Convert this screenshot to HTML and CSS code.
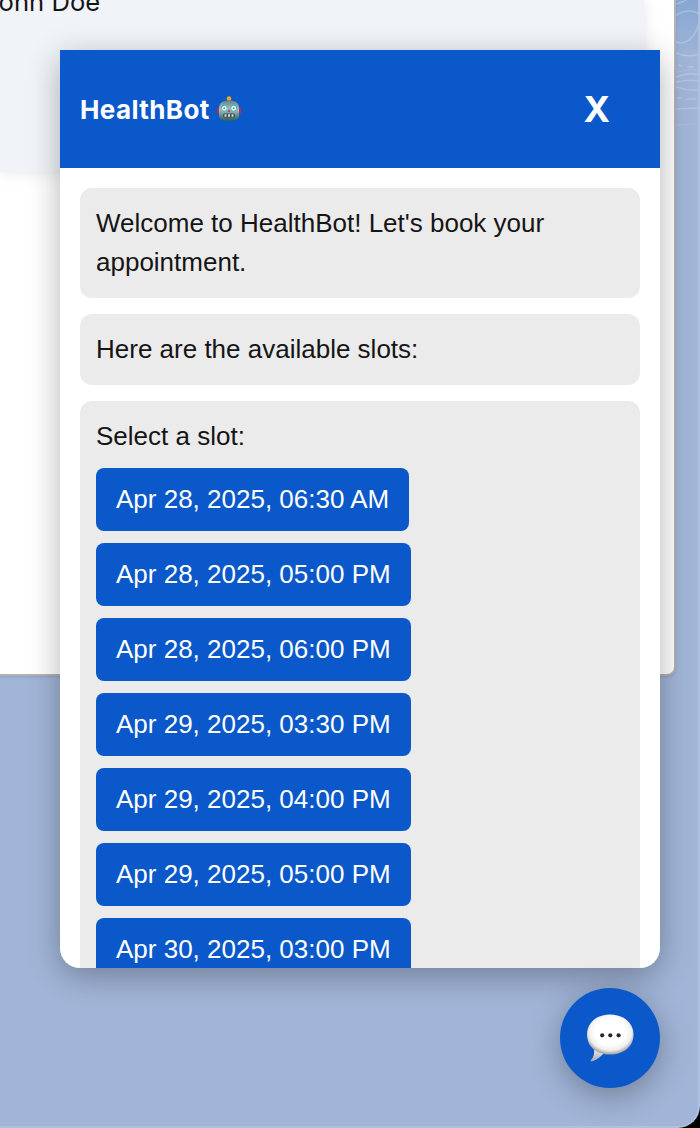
FILE: index.html
```html
<!DOCTYPE html>
<html lang="en">
<head>
<meta charset="utf-8">
<title>HealthBot</title>
<link rel="stylesheet" href="styles.css">
</head>
<body>
<div class="window">
  <svg class="pattern" width="24" height="140" viewBox="0 0 24 140" fill="none" stroke="#c6d4eb" stroke-opacity=".5" stroke-width="1.5">
    <path d="M0 4Q8 2 13-2M0 15Q12 8 22 13Q25 18 21 29Q15 43 3 43L0 42M0 53Q10 58 24 54M3 65L6 66M11 67L18 67M0 77Q12 72 24 75M0 82Q12 79 24 81M0 87Q12 91 24 90M1 98L6 98M11 99L20 99M0 109L24 108" />
    <path d="M0 72Q10 69 24 70M0 125L24 124" stroke-opacity=".2"/>
  </svg>
  <main class="page">
    <section class="profile"><p class="name">John Doe</p></section>
  </main>
</div>
<aside class="chat">
  <header class="chat-header">
    <h1 class="title">HealthBot
      <svg class="robot" width="26" height="26" viewBox="0 0 26 26">
        <defs><linearGradient id="metal" x2="0" y2="1"><stop offset="0" stop-color="#66817e"/><stop offset=".45" stop-color="#9cc5c5"/><stop offset="1" stop-color="#235e62"/></linearGradient></defs>
        <rect x="12" y="3" width="2" height="4" fill="#b84735"/>
        <circle cx="13" cy="2.6" r="2.3" fill="#efa72d"/>
        <rect x="1" y="11" width="4" height="7" rx="1.5" fill="#b92b49"/>
        <rect x="21" y="11" width="4" height="7" rx="1.5" fill="#b92b49"/>
        <path d="M7 5.5Q13 3 19 5.5Q23 7 23 12V20Q22 24 18 25H8Q4 24 3 20V12Q3 7 7 5.5Z" fill="url(#metal)"/>
        <g fill="#edffff" stroke="#4ba6bd" stroke-width="1"><circle cx="8.3" cy="12.2" r="3"/><circle cx="17.7" cy="12.2" r="3"/></g>
        <circle cx="8.3" cy="12.2" r="1" fill="#4596ae"/><circle cx="17.7" cy="12.2" r="1" fill="#4596ae"/>
        <path d="M13 13L11.5 16H14.5Z" fill="#c8433f"/>
        <rect x="7" y="17.5" width="12" height="4" rx="1.5" fill="#454b4c"/>
        <path d="M8.5 19.5H10.5M12 19.5H14M15.5 19.5H17.5" stroke="#d3d9d8" stroke-width="2.4"/>
      </svg>
    </h1>
    <button class="close">X</button>
  </header>
  <div class="messages">
    <div class="message">Welcome to HealthBot! Let's book your appointment.</div>
    <div class="message">Here are the available slots:</div>
    <div class="message">Select a slot:
      <div class="slots">
        <button class="slot">Apr 28, 2025, 06:30 AM</button>
        <button class="slot">Apr 28, 2025, 05:00 PM</button>
        <button class="slot">Apr 28, 2025, 06:00 PM</button>
        <button class="slot">Apr 29, 2025, 03:30 PM</button>
        <button class="slot">Apr 29, 2025, 04:00 PM</button>
        <button class="slot">Apr 29, 2025, 05:00 PM</button>
        <button class="slot">Apr 30, 2025, 03:00 PM</button>
      </div>
    </div>
  </div>
</aside>
<button class="launcher" aria-label="Open chat">
  <svg width="50" height="50" viewBox="0 0 50 50">
    <defs>
      <radialGradient id="bubble" cx=".5" cy=".43" r=".56"><stop offset=".6" stop-color="#fff"/><stop offset=".83" stop-color="#eee"/><stop offset="1" stop-color="#a5a5a5"/></radialGradient>
      <linearGradient id="tail" x2="0" y2="1"><stop offset="0" stop-color="#eee"/><stop offset="1" stop-color="#aaa"/></linearGradient>
    </defs>
    <path d="M9 36Q10 43 6 47Q4 49 8 48Q15 45 19 40Z" fill="url(#tail)"/>
    <path d="M25 1.5C38 1.5 48.5 9.5 48.5 21.5S39 41.5 25 41.5S2 33.5 2 21.5S12 1.5 25 1.5Z" fill="url(#bubble)"/>
    <g fill="#292929"><circle cx="17.2" cy="22.3" r="2.1"/><circle cx="25.3" cy="22.3" r="2.1"/><circle cx="33.6" cy="22.3" r="2.1"/></g>
  </svg>
</button>
</body>
</html>
```
FILE: styles.css
```css
* { box-sizing: border-box; }
body { margin: 0; height: 1128px; overflow: hidden; position: relative; background: #000; }
button { border: 0; margin: 0; color: #fff; background: #0a58ca; }
.window {
  position: relative; height: 1128px; overflow: hidden;
  background: linear-gradient(#86a6d2 0, #a1b5d8 60px);
  border-right: 2px solid #adc0df; border-bottom: 2px solid #adc0df;
  border-bottom-right-radius: 22px;
}
.pattern { position: absolute; left: 676px; top: 0; }
.page {
  width: 676px; height: 676px; background: #fff;
  border-right: 2px solid #b2b2b2; border-bottom: 2px solid #b2b2b2;
  border-bottom-right-radius: 9px; box-shadow: 0 1px 3px rgba(0,0,0,.12);
}
.profile { width: 644px; height: 172px; background: #f0f4f9; box-shadow: 0 0 16px rgba(0,0,0,.1); }
.name { margin: 0 0 0 -16px; font: 25.6px/39px Inter, sans-serif; color: #151515; transform: translateY(-18px); }
.chat {
  position: absolute; left: 60px; top: 50px; width: 600px; height: 918px;
  display: flex; flex-direction: column; overflow: hidden;
  background: #fff; border-radius: 0 0 20px 20px;
}
.chat, .launcher { box-shadow: 0 8px 32px rgba(0,0,0,.3); }
.chat-header {
  flex: none; height: 118px; padding: 0 50px 0 20px;
  display: flex; align-items: center; justify-content: space-between;
  background: #0a58ca; color: #fff;
}
.title { margin: 0; display: flex; align-items: center; gap: 6px; font: 700 26px/39px Inter, sans-serif; letter-spacing: .4px; }
.close { padding: 0; font: 700 36px/40px Inter, sans-serif; }
.messages {
  flex: 1; min-height: 0; overflow: hidden; padding: 20px;
  display: flex; flex-direction: column; gap: 16px;
  font: 26px/39px "Liberation Sans", Arial, sans-serif; color: #151515;
}
.message { flex: none; padding: 16px; background: #ebebeb; border-radius: 12px; }
.slots { margin-top: 12px; display: flex; flex-direction: column; align-items: flex-start; gap: 12px; }
.slot { height: 63px; padding: 0 20px; border-radius: 8px; font: inherit; white-space: nowrap; }
.launcher {
  position: absolute; left: 560px; top: 988px; width: 100px; height: 100px;
  padding: 0; border-radius: 50%; display: flex; align-items: center; justify-content: center;
}
```
